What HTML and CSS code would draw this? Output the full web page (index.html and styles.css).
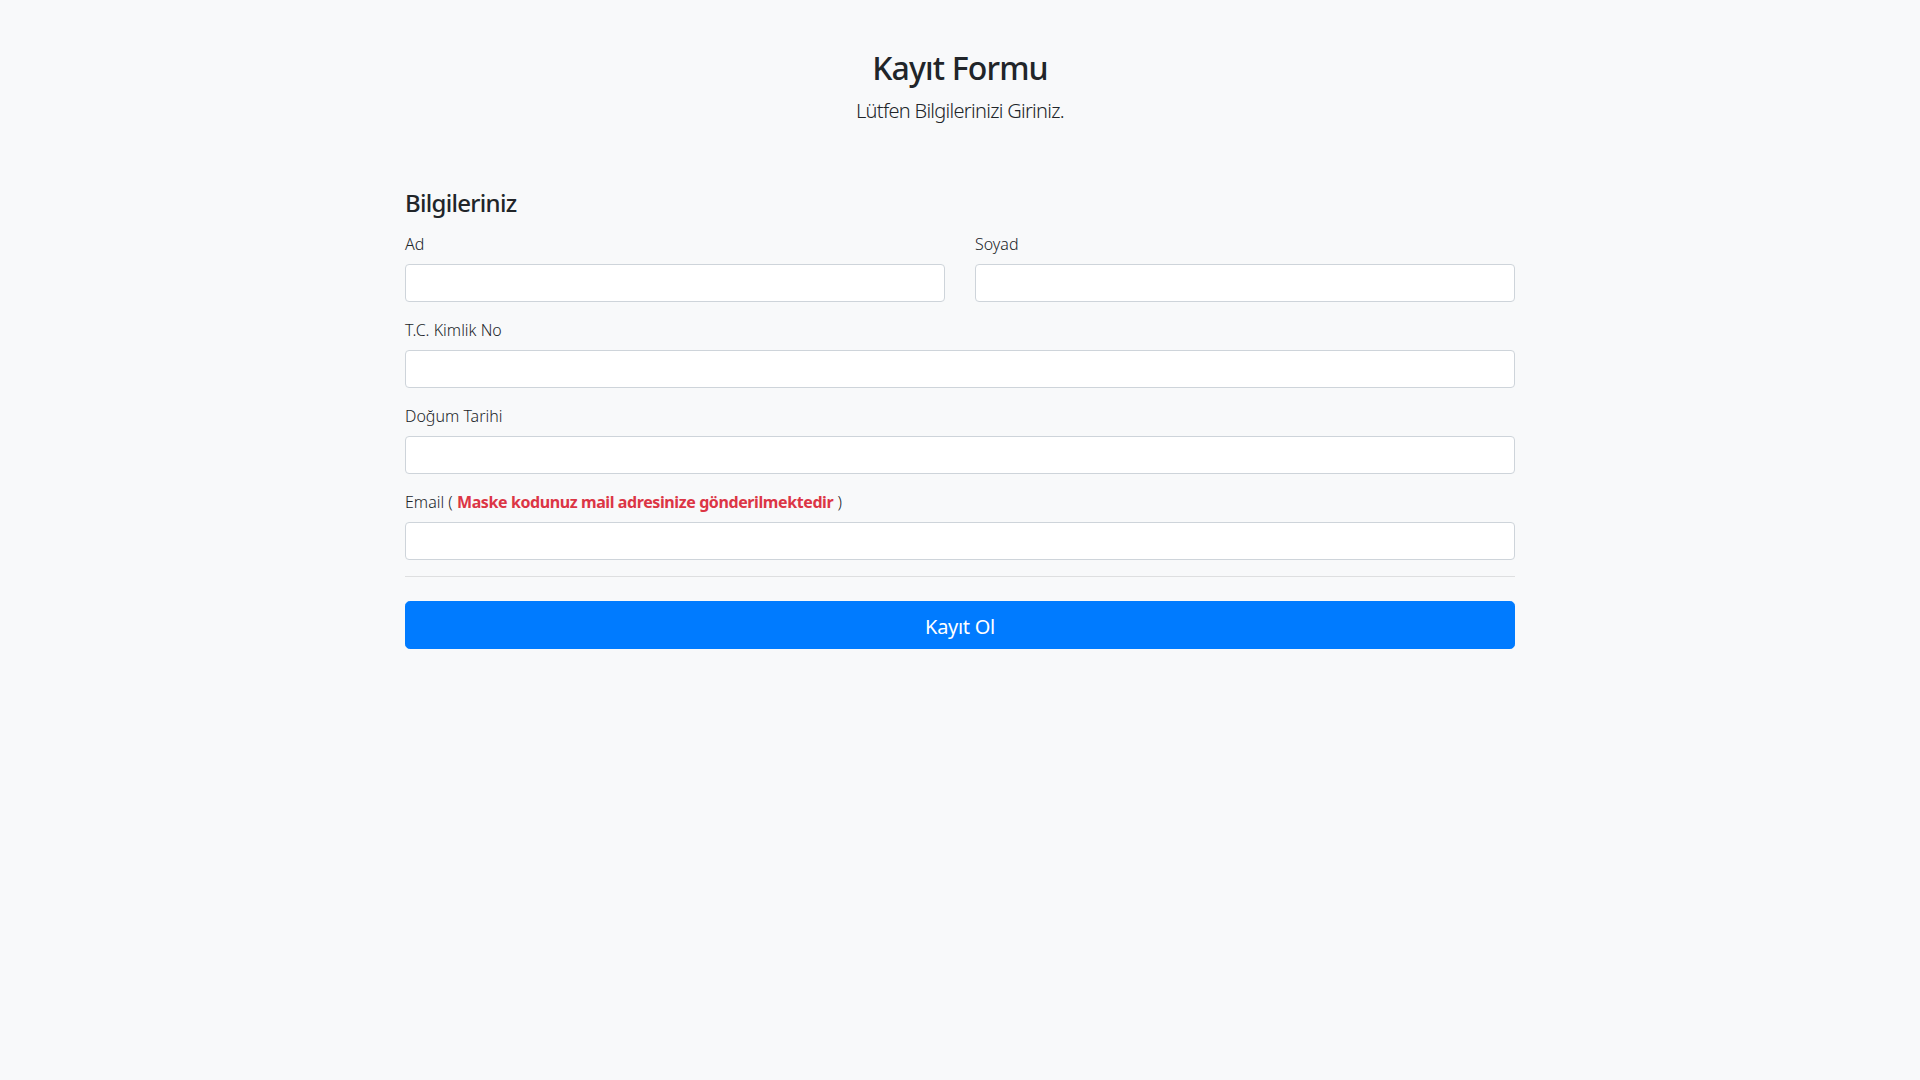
FILE: index.html
```html
<!DOCTYPE html>
<html lang="tr">
<head>
<meta charset="utf-8">
<title>Kayıt Formu</title>
<link rel="stylesheet" href="styles.css">
</head>
<body>
<div class="container">
  <header class="page-head">
    <h2 class="title">Kayıt Formu</h2>
    <p class="lead">Lütfen Bilgilerinizi Giriniz.</p>
  </header>
  <h4 class="section-title">Bilgileriniz</h4>
  <form class="form">
    <div class="row">
      <div class="field">
        <label class="label">Ad</label>
        <input class="input" type="text">
      </div>
      <div class="field">
        <label class="label">Soyad</label>
        <input class="input" type="text">
      </div>
    </div>
    <div class="field">
      <label class="label">T.C. Kimlik No</label>
      <input class="input" type="text">
    </div>
    <div class="field">
      <label class="label">Doğum Tarihi</label>
      <input class="input" type="text">
    </div>
    <div class="field">
      <label class="label">Email ( <strong class="danger">Maske kodunuz mail adresinize gönderilmektedir</strong> )</label>
      <input class="input" type="text">
    </div>
    <hr class="divider">
    <button class="btn" type="button">Kayıt Ol</button>
  </form>
</div>
</body>
</html>
```

FILE: styles.css
```css
* { box-sizing: border-box; }
html, body {
  margin: 0;
  padding: 0;
  background: #f8f9fa;
  color: #212529;
  font-family: "Noto Sans", "Open Sans", sans-serif;
  font-size: 16px;
  line-height: 1.5;
}
.container {
  width: 1140px;
  margin: 0 auto;
  padding: 0 15px;
}
.page-head {
  text-align: center;
  padding: 48px 0;
}
.title {
  margin: 0 0 9px;
  font-size: 32px;
  font-weight: 500;
  line-height: 1.2;
  letter-spacing: -0.85px;
  padding-top: 1px;
}
.lead {
  margin: 0 0 14px;
  font-size: 20px;
  font-weight: 300;
  line-height: 1.5;
  letter-spacing: -0.7px;
}
.section-title {
  margin: 0 0 14px;
  padding-top: 1px;
  font-size: 24px;
  font-weight: 500;
  line-height: 1.2;
  letter-spacing: -0.7px;
}
.form { margin: 0; }
.row {
  display: grid;
  grid-template-columns: 1fr 1fr;
  column-gap: 30px;
}
.field { margin-bottom: 16px; }
.label {
  display: block;
  margin-bottom: 8px;
  font-size: 16px;
  line-height: 24px;
  font-weight: 300;
}
.danger {
  color: #dc3545;
  font-weight: 700;
  letter-spacing: -0.4px;
}
.input {
  display: block;
  width: 100%;
  height: 38px;
  padding: 6px 12px;
  font: inherit;
  background: #fff;
  border: 1px solid #ced4da;
  border-radius: 4px;
  outline: none;
}
.divider {
  margin: 16px 0 24px;
  border: 0;
  border-top: 1px solid rgba(0,0,0,0.1);
  height: 0;
}
.btn {
  display: block;
  width: 100%;
  height: 48px;
  padding: 10px 16px 6px;
  font-family: inherit;
  font-size: 20px;
  font-weight: 400;
  line-height: 1.5;
  color: #fff;
  background: #007bff;
  border: 1px solid #007bff;
  border-radius: 4.8px;
  letter-spacing: -0.3px;
}
```
